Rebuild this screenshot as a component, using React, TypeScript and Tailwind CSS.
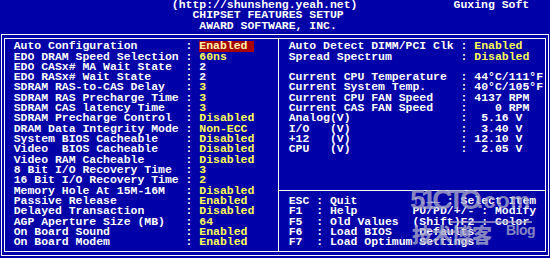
import React from "react";

type Kind = "hl" | "y" | "w";

const leftItems: [string, string, Kind][] = [
  ["Auto Configuration", "Enabled", "hl"],
  ["EDO DRAM Speed Selection", "60ns", "y"],
  ["EDO CASx# MA Wait State", "2", "w"],
  ["EDO RASx# Wait State", "2", "w"],
  ["SDRAM RAS-to-CAS Delay", "3", "y"],
  ["SDRAM RAS Precharge Time", "3", "y"],
  ["SDRAM CAS latency Time", "3", "y"],
  ["SDRAM Precharge Control", "Disabled", "y"],
  ["DRAM Data Integrity Mode", "Non-ECC", "y"],
  ["System BIOS Cacheable", "Disabled", "y"],
  ["Video  BIOS Cacheable", "Disabled", "y"],
  ["Video RAM Cacheable", "Disabled", "y"],
  ["8 Bit I/O Recovery Time", "3", "y"],
  ["16 Bit I/O Recovery Time", "2", "y"],
  ["Memory Hole At 15M-16M", "Disabled", "y"],
  ["Passive Release", "Enabled", "y"],
  ["Delayed Transaction", "Disabled", "y"],
  ["AGP Aperture Size (MB)", "64", "y"],
  ["On Board Sound", "Enabled", "y"],
  ["On Board Modem", "Enabled", "y"],
];

const rightTop: ([string, string, Kind] | null)[] = [
  ["Auto Detect DIMM/PCI Clk", "Enabled", "y"],
  ["Spread Spectrum", "Disabled", "y"],
  null,
  ["Current CPU Temperature", "44°C/111°F", "w"],
  ["Current System Temp.", "40°C/105°F", "w"],
  ["Current CPU FAN Speed", "4137 RPM", "w"],
  ["Current CAS FAN Speed", "   0 RPM", "w"],
  ["Analog(V)", " 5.16 V", "w"],
  ["I/O   (V)", " 3.40 V", "w"],
  ["+12   (V)", "12.10 V", "w"],
  ["CPU   (V)", " 2.05 V", "w"],
  null,
  null,
  null,
];

const Row = ({ children }: { children?: React.ReactNode }) => (
  <div className="h-[10.32px] whitespace-pre">{children}</div>
);

const Item = ({ label, value, kind }: { label: string; value: string; kind: Kind }) => (
  <Row>
    <span className="text-white">{label.padEnd(25) + ": "}</span>
    {kind === "hl" ? (
      <span className="inline-block w-[55px] bg-[#a80000] text-[#fff6b0]">{value}</span>
    ) : (
      <span className={kind === "y" ? "text-[#ffff55]" : "text-white"}>{value}</span>
    )}
  </Row>
);

export default function App() {
  return (
    <div className="relative w-[550px] h-[258px] overflow-hidden bg-[#0000a8] font-['Liberation_Mono',monospace] font-bold text-[11.46px] leading-[10.32px] text-white">
      <Row>{" ".repeat(25) + "(http://shunsheng.yeah.net)".padEnd(41) + "Guxing Soft"}</Row>
      <Row>{" ".repeat(28) + "CHIPSET FEATURES SETUP"}</Row>
      <Row>{" ".repeat(29) + "AWARD SOFTWARE, INC."}</Row>

      <div className="ml-[1px] mt-[3px] w-[548px] border border-white px-[2px] py-[3px]">
        <div className="flex border border-white">
          <div className="w-[273px] pl-[8.75px] pt-[2.28px] pb-[3.3px]">
            {leftItems.map(([l, v, k], i) => (
              <Item key={i} label={l} value={v} kind={k} />
            ))}
          </div>
          <div className="w-px bg-white" />
          <div className="flex-1 flex flex-col pt-[2.28px]">
            <div className="pl-[9.75px]">
              {rightTop.map((r, i) =>
                r ? <Item key={i} label={r[0]} value={r[1]} kind={r[2]} /> : <Row key={i} />
              )}
            </div>
            <div className="mt-[4.8px] mb-[4.52px] h-px bg-white" />
            <div className="pl-[9.75px]">
              <Row>
                {"ESC : Quit".padEnd(18)}
                <span className="inline-block w-[27.5px]">↑↓→←</span>
                {" : Select Item"}
              </Row>
              <Row>{"F1  : Help".padEnd(18) + "PU/PD/+/- : Modify"}</Row>
              <Row>{"F5  : Old Values".padEnd(18) + "(Shift)F2 : Color"}</Row>
              <Row>{"F6  : Load BIOS".padEnd(19) + "Defaults"}</Row>
              <Row>{"F7  : Load Optimum Settings"}</Row>
            </div>
          </div>
        </div>
      </div>

      {/* watermark */}
      <div className="pointer-events-none absolute left-[410px] top-[186px] text-[28px] leading-none font-['Liberation_Sans',sans-serif] font-black tracking-[-4.5px] text-[rgba(170,170,200,0.8)]">
        51CTO
      </div>
      <div className="pointer-events-none absolute left-[477px] top-[190px] text-[22px] leading-none font-['Liberation_Sans',sans-serif] font-bold tracking-[0.5px] text-[rgba(170,170,200,0.8)]">
        .com
      </div>
      <div className="pointer-events-none absolute left-[450px] top-[221px] w-[82px] h-[2px] bg-[rgba(170,170,200,0.7)]" />
      <div className="pointer-events-none absolute left-[412px] top-[225px] text-[20px] leading-none font-['Noto_Sans_CJK_SC',sans-serif] font-black text-[rgba(170,170,200,0.8)]">
        技术博客
      </div>
      <div className="pointer-events-none absolute left-[506px] top-[223px] text-[14px] leading-none font-['Liberation_Sans',sans-serif] font-bold tracking-[-0.5px] text-[rgba(170,170,200,0.8)]">
        Blog
      </div>
    </div>
  );
}
